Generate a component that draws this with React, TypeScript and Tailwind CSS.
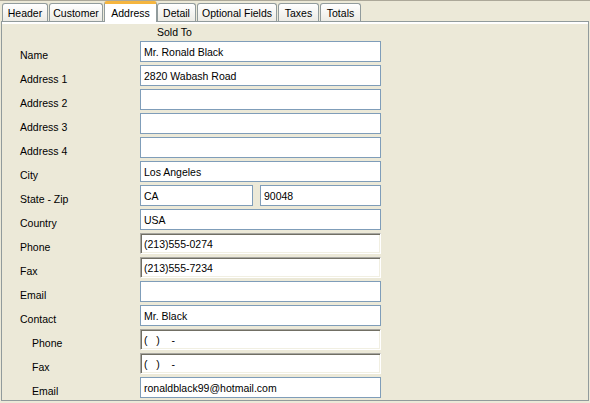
import React from "react";

const tabs = [
  { label: "Header", w: "w-[46px]" },
  { label: "Customer", w: "w-[54px]" },
  { label: "Address", w: "w-[53px]", active: true },
  { label: "Detail", w: "w-[39px] -ml-[1px]" },
  { label: "Optional Fields", w: "w-[80px]" },
  { label: "Taxes", w: "w-[41px]" },
  { label: "Totals", w: "w-[41px]" },
];

type Row = {
  label: string;
  value?: string;
  indent?: boolean;
  sunken?: boolean;
  split?: [string, string];
};

const rows: Row[] = [
  { label: "Name", value: "Mr. Ronald Black" },
  { label: "Address 1", value: "2820 Wabash Road" },
  { label: "Address 2" },
  { label: "Address 3" },
  { label: "Address 4" },
  { label: "City", value: "Los Angeles" },
  { label: "State - Zip", split: ["CA", "90048"] },
  { label: "Country", value: "USA" },
  { label: "Phone", value: "(213)555-0274", sunken: true },
  { label: "Fax", value: "(213)555-7234", sunken: true },
  { label: "Email" },
  { label: "Contact", value: "Mr. Black" },
  { label: "Phone", value: "(   )    -", indent: true, sunken: true },
  { label: "Fax", value: "(   )    -", indent: true, sunken: true },
  { label: "Email", value: "ronaldblack99@hotmail.com", indent: true },
];

function Field({ value, w, sunken }: { value?: string; w: string; sunken?: boolean }) {
  if (sunken) {
    return (
      <div
        className={`${w} h-[21px] flex items-center bg-white border border-t-[#a7a6a0] border-l-[#a7a6a0] border-b-white border-r-white shadow-[inset_1px_1px_0_#716f64,inset_-1px_-1px_0_#f1efe2] pl-[3px] whitespace-pre`}
      >
        {value}
      </div>
    );
  }
  return (
    <div
      className={`${w} h-[21px] flex items-center bg-white border border-[#7f9db9] pl-[3px] whitespace-pre`}
    >
      {value}
    </div>
  );
}

export default function App() {
  return (
    <div
      className="w-[590px] h-[403px] bg-[#ece9d8] border-t border-[#aca899] text-[10.5px] leading-[12px] text-black overflow-hidden"
      style={{ fontFamily: '"Liberation Sans", Arial, sans-serif' }}
    >
      <div className="flex items-end h-[20px] pl-[2px] gap-[1px]">
        {tabs.map((t) =>
          t.active ? (
            <div
              key={t.label}
              className={`${t.w} h-[21px] -mb-[1px] relative z-10 bg-white border-x border-[#919b9c] border-t-[3px] border-t-[#f5b53f] rounded-t-[3px] flex items-center justify-center`}
            >
              {t.label}
            </div>
          ) : (
            <div
              key={t.label}
              className={`${t.w} h-[18px] shrink-0 bg-gradient-to-b from-white to-[#ecebe5] border border-b-0 border-[#919b9c] rounded-t-[3px] flex items-center justify-center pt-[1px]`}
            >
              {t.label}
            </div>
          )
        )}
      </div>
      <div className="ml-[1px] w-[588px] h-[380px] border border-[#919b9c]">
        <div className="h-full border-t-2 border-white pl-[18px] pt-[2px]">
          <div className="pl-[137px] h-[12px]">Sold To</div>
          <div className="mt-[3px] flex flex-col gap-[3px]">
            {rows.map((r, i) => (
              <div key={i} className="flex h-[21px]">
                <div
                  className={`w-[120px] flex items-end pb-[1px] ${r.indent ? "pl-[12px]" : ""}`}
                >
                  {r.label}
                </div>
                {r.split ? (
                  <div className="flex gap-[7px]">
                    <Field value={r.split[0]} w="w-[113px]" />
                    <Field value={r.split[1]} w="w-[121px]" />
                  </div>
                ) : (
                  <Field value={r.value} w="w-[241px]" sunken={r.sunken} />
                )}
              </div>
            ))}
          </div>
        </div>
      </div>
    </div>
  );
}
